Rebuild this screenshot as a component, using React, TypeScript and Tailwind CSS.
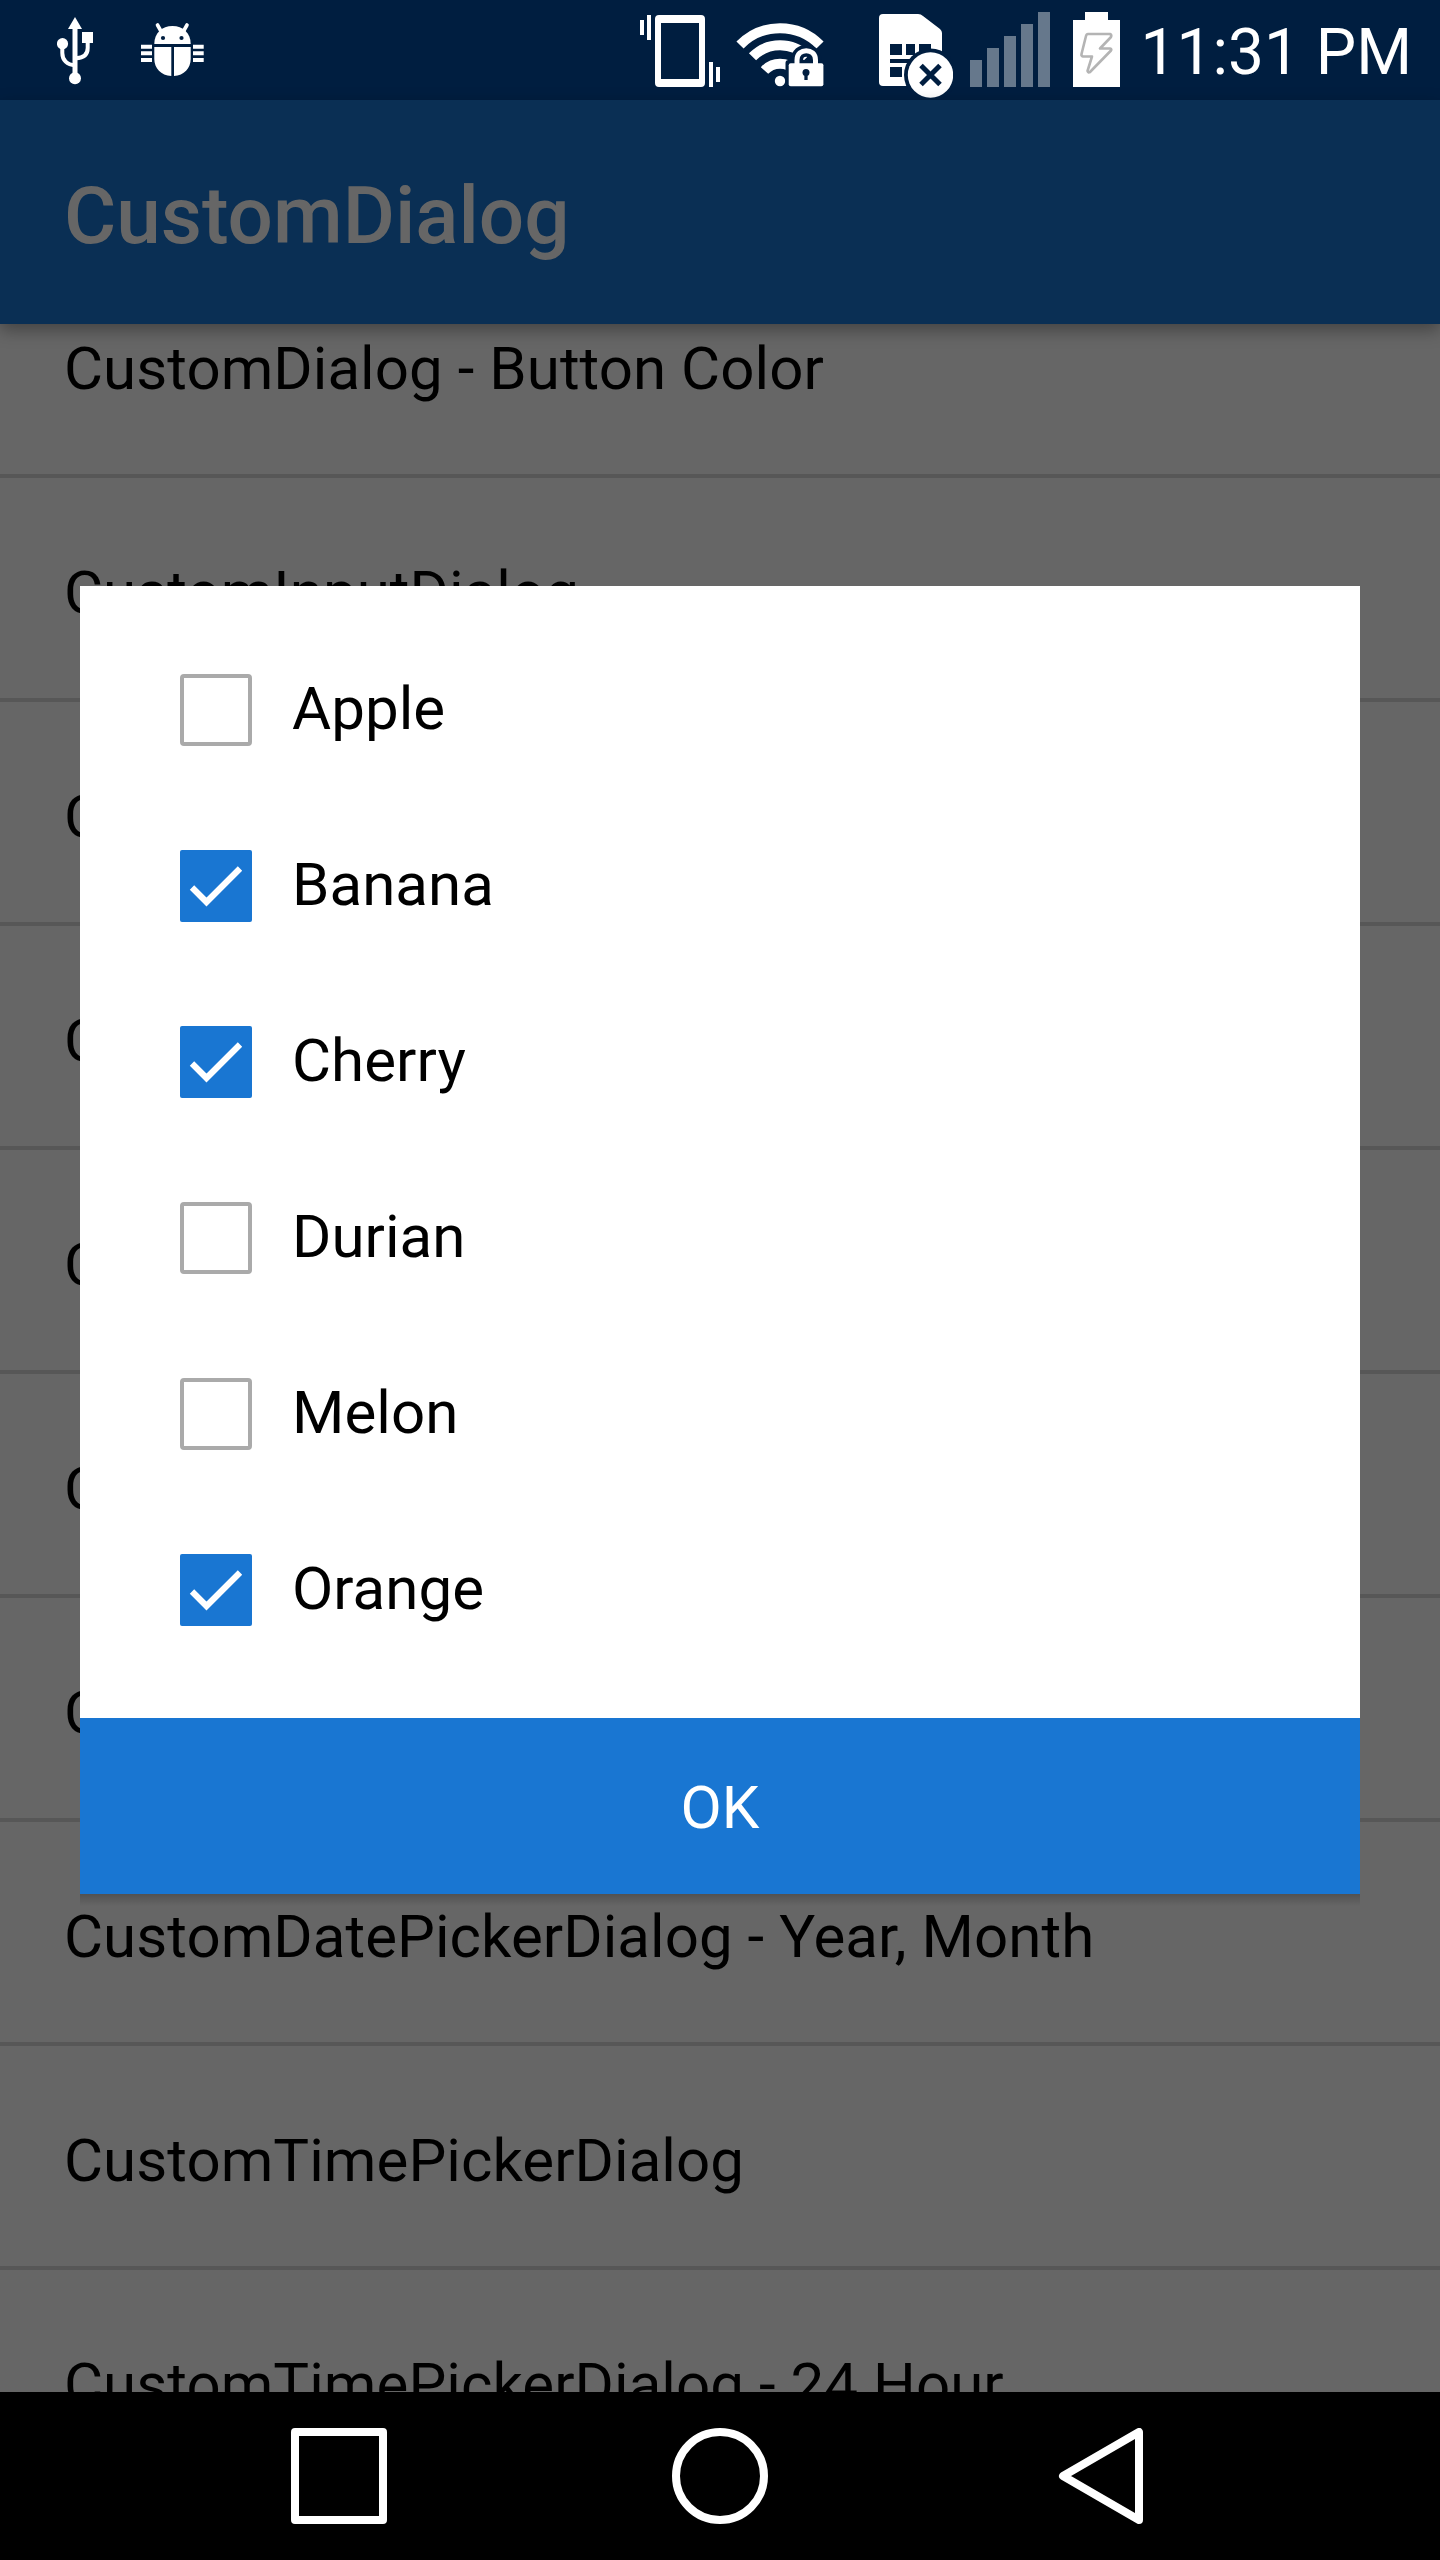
const rows = [
  "CustomDialog - Button Color",
  "CustomInputDialog",
  "CustomListDialog",
  "CustomListDialog - Single Choice",
  "CustomListDialog - Multi Choice",
  "CustomProgressDialog",
  "CustomDatePickerDialog",
  "CustomDatePickerDialog - Year, Month",
  "CustomTimePickerDialog",
  "CustomTimePickerDialog - 24 Hour",
];

const fruits = [
  { name: "Apple", checked: false },
  { name: "Banana", checked: true },
  { name: "Cherry", checked: true },
  { name: "Durian", checked: false },
  { name: "Melon", checked: false },
  { name: "Orange", checked: true },
];

function UsbIcon() {
  return (
    <svg className="h-[100px] w-[36px] shrink-0" viewBox="57 0 36 100" fill="#fff">
      <path d="M75 17L82 29H68Z" />
      <path d="M75 28V76" stroke="#fff" strokeWidth="5" />
      <circle cx="75" cy="78.3" r="6" />
      <circle cx="62.5" cy="43.7" r="5.6" />
      <path d="M82 32H93V43H82Z" />
      <path d="M62.3 46V53C62.3 60 67 65 75 65.3M87.7 42V48C87.7 54 84 58 76 58.2" fill="none" stroke="#fff" strokeWidth="4" />
    </svg>
  );
}

function DebugIcon() {
  return (
    <svg className="h-[100px] w-[64px] shrink-0" viewBox="140 0 64 100" fill="#fff">
      <path d="M154.3 44C154.3 33 162 26 172.5 26S190.7 33 190.7 44Z" />
      <path d="M157.5 25L162 33M187 25L182.5 33" stroke="#fff" strokeWidth="3.6" strokeLinecap="round" />
      <circle cx="163" cy="38" r="2.1" fill="#001e40" />
      <circle cx="181.5" cy="38" r="2.1" fill="#001e40" />
      <path d="M154.3 47H171.3V76C161 75.5 154.3 68 154.3 59ZM174 47H190.7V59C190.7 68 184 75.5 174 76Z" />
      <path d="M141 44.7h11v4h-11zM141 51.3h11v4h-11zM141 58h11v4h-11zM193 44.7h10.7v4H193zM193 51.3h10.7v4H193zM193 58h10.7v4H193z" />
    </svg>
  );
}

function VibrateIcon() {
  return (
    <svg className="h-[100px] w-[80px] shrink-0" viewBox="640 0 80 100" fill="#fff">
      <path d="M640 20h4v15h-4zM647 15h4v25h-4zM709 62h4v25h-4zM716 67h4v15h-4z" />
      <path fillRule="evenodd" d="M659 15H701a4 4 0 0 1 4 4V83a4 4 0 0 1-4 4H659a4 4 0 0 1-4-4V19a4 4 0 0 1 4-4ZM661 23V79H699V23Z" />
    </svg>
  );
}

function WifiLockIcon() {
  return (
    <svg className="h-[100px] w-[88px] shrink-0" viewBox="736 0 88 100" fill="none">
      <g stroke="#fff" strokeWidth="10">
        <path d="M740 45A56 56 0 0 1 820 45" />
        <path d="M752.5 56.8A38.5 38.5 0 0 1 807.5 56.8" />
        <path d="M764.5 70.5A21 21 0 0 1 795.5 70.5" />
      </g>
      <circle cx="780" cy="81" r="5.2" fill="#fff" />
      <path d="M797 66V60C797 47.5 815.5 47.5 815.5 60V66" stroke="#001e40" strokeWidth="12" />
      <rect x="785.5" y="60" width="40" height="30" rx="3" fill="#001e40" />
      <path d="M797 65V60C797 47.500 815.5 47.5 815.5 60V65" stroke="#fff" strokeWidth="5" />
      <rect x="788.7" y="63.3" width="34.7" height="23" rx="2" fill="#fff" />
      <circle cx="806" cy="72.5" r="3.5" fill="#001e40" />
      <path d="M806 73V80" stroke="#001e40" strokeWidth="3.3" />
    </svg>
  );
}

function NoSimIcon() {
  return (
    <svg className="h-[100px] w-[74px] shrink-0" viewBox="879 0 74 100">
      <path fill="#fff" d="M883 14H918Q921 14 923 16L940 29Q942 31 942 33V86H883Q879 86 879 82V18Q879 14 883 14Z" />
      <path fill="#001e40" d="M890 44h12v11h-12zM906 44h9v11h-9zM919 44h12v11h-12zM890 59h26v4h-26zM890 67h12v10h-12z" />
      <circle cx="930.5" cy="75" r="26.5" fill="#001e40" />
      <circle cx="930.5" cy="75" r="22.7" fill="#fff" />
      <path d="M921 65.5L940 84.5M940 65.5L921 84.5" stroke="#001e40" strokeWidth="5" />
    </svg>
  );
}

function SignalIcon() {
  return (
    <svg className="h-[100px] w-[80px] shrink-0" viewBox="970 0 80 100" fill="#66788c">
      <path d="M970 60h12v27h-12zM987 48h12v39h-12zM1004 36h12v51h-12zM1021 24h12v63h-12zM1038 12h12v75h-12z" />
    </svg>
  );
}

function BatteryIcon() {
  return (
    <svg className="h-[100px] w-[47px] shrink-0" viewBox="1073 0 47 100">
      <path fill="#fff" d="M1085 12h23v8h12v67h-47V20h12z" />
      <path
        d="M1088 34H1110Q1112 35 1111 37L1100 48.5H1110Q1112 49 1111 50.5L1090 72Q1088 73 1087.5 71L1092 56.5H1083Q1081 56 1081.5 54L1086 36Q1086.5 34 1088 34Z"
        fill="none"
        stroke="#b4b4b4"
        strokeWidth="2.6"
        strokeLinejoin="round"
      />
    </svg>
  );
}

function Checkbox({ checked }: { checked: boolean }) {
  if (!checked) return <span className="size-[72px] shrink-0 rounded-[4px] border-4 border-[#aaaaaa]" />;
  return (
    <span className="size-[72px] shrink-0 rounded-[2px] bg-[#1976d2]">
      <svg viewBox="0 0 72 72" className="size-full" fill="none" stroke="#fff" strokeWidth="6.2">
        <path d="M12 37.5L26.5 52L60 18.5" />
      </svg>
    </span>
  );
}

export default function App() {
  return (
    <div className="relative flex h-[2560px] w-[1440px] flex-col overflow-hidden bg-[#666666] font-['Roboto',sans-serif]">
      <div className="flex h-[100px] shrink-0 items-center bg-[#001e40] pl-[57px] text-white">
        <UsbIcon />
        <div className="w-[47px]" />
        <DebugIcon />
        <div className="ml-auto flex items-center pr-7">
          <VibrateIcon />
          <div className="w-4" />
          <WifiLockIcon />
          <div className="w-[55px]" />
          <NoSimIcon />
          <div className="w-[17px]" />
          <SignalIcon />
          <div className="w-[23px]" />
          <BatteryIcon />
          <div className="flex w-[292px] justify-end whitespace-nowrap pt-1.5 text-[64px] leading-[76px]">11:31 PM</div>
        </div>
      </div>
      <header className="z-10 flex h-[224px] shrink-0 items-center bg-[#0a2f54] px-16 pt-2 shadow-[0_6px_16px_rgba(0,0,0,0.35)]">
        <h1 className="text-[80px] font-medium leading-[94px] text-[#666666]">CustomDialog</h1>
      </header>
      <main className="min-h-0 flex-1 overflow-hidden">
        <ul className="-mt-[70px]">
          {rows.map((label) => (
            <li key={label} className="flex h-[224px] items-center border-b-4 border-[#575757] px-16 pt-2.5 text-[60px] leading-[70px] tracking-[0.06px] text-black">
              {label}
            </li>
          ))}
        </ul>
      </main>
      <nav className="z-10 flex h-[168px] shrink-0 items-center justify-center bg-black">
        <svg className="h-24 w-[858px]" viewBox="291 2428 858 96" fill="none" stroke="#fff" strokeWidth="8" strokeLinejoin="round">
          <rect x="295" y="2432" width="88" height="88" />
          <circle cx="720" cy="2476" r="44" />
          <path d="M1063 2476L1139 2432V2520Z" />
        </svg>
      </nav>
      <section role="dialog" className="absolute left-20 top-[586px] z-20 flex w-[1280px] flex-col bg-white">
        <div className="flex h-[1132px] flex-col pl-[100px] pt-9">
          {fruits.map((fruit) => (
            <label key={fruit.name} className="flex h-[176px] items-center gap-10 text-[60px] leading-[70px] tracking-[0.06px] text-black">
              <Checkbox checked={fruit.checked} />
              <span className="pb-0.5">{fruit.name}</span>
            </label>
          ))}
        </div>
        <button className="h-[176px] bg-[#1976d2] pt-1 text-[60px] leading-[70px] text-white">OK</button>
        <div className="absolute inset-x-0 top-full h-3 bg-linear-to-b from-black/20 to-transparent" />
      </section>
    </div>
  );
}
